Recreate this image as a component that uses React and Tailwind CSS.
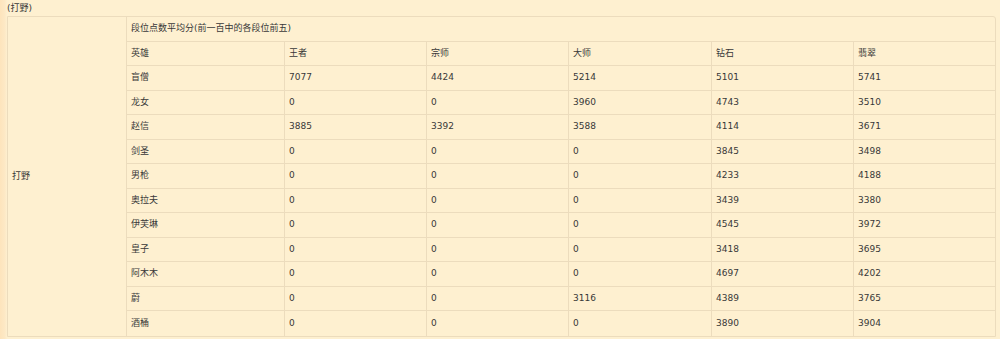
import React from "react";

const tiers = ["王者", "宗师", "大师", "钻石", "翡翠"];

const heroes = [
  ["盲僧", 7077, 4424, 5214, 5101, 5741],
  ["龙女", 0, 0, 3960, 4743, 3510],
  ["赵信", 3885, 3392, 3588, 4114, 3671],
  ["剑圣", 0, 0, 0, 3845, 3498],
  ["男枪", 0, 0, 0, 4233, 4188],
  ["奥拉夫", 0, 0, 0, 3439, 3380],
  ["伊芙琳", 0, 0, 0, 4545, 3972],
  ["皇子", 0, 0, 0, 3418, 3695],
  ["阿木木", 0, 0, 0, 4697, 4202],
  ["蔚", 0, 0, 3116, 4389, 3765],
  ["酒桶", 0, 0, 0, 3890, 3904],
];

const cols = "grid grid-cols-[158px_142px_142px_143px_142px_141px]";

function Row({ cells, last }) {
  return (
    <div className={`${cols} h-[24.5px] ${last ? "" : "border-b border-[#ecdcbd]"}`}>
      {cells.map((c, i) => (
        <div
          key={i}
          className={`flex items-center px-[4px] ${i < cells.length - 1 ? "border-r border-[#ecdcbd]" : ""}`}
        >
          {c}
        </div>
      ))}
    </div>
  );
}

export default function App() {
  return (
    <div
      className="w-[1000px] h-[339px] overflow-hidden bg-[linear-gradient(to_right,#fde4bc_0px,#fde9c6_5px,#fef0d0_7px)] text-[9px] text-[#383838]"
      style={{ fontFamily: '"DejaVu Sans", "Noto Sans CJK SC", sans-serif' }}
    >
      <div className="h-[16px] leading-[16px] pl-[7px]">(打野)</div>
      <div className="ml-[7px] w-[989px] flex border border-[#ecdcbd] rounded-tr-[3px] bg-[#fef0d0]">
        <div className="w-[119px] shrink-0 border-r border-[#ecdcbd] flex items-center px-[4px]">
          打野
        </div>
        <div className="flex-1">
          <div className="h-[24.5px] border-b border-[#ecdcbd] flex items-center px-[4px]">
            段位点数平均分(前一百中的各段位前五)
          </div>
          <Row cells={["英雄", ...tiers]} />
          {heroes.map((h, i) => (
            <Row key={h[0]} cells={h} last={i === heroes.length - 1} />
          ))}
        </div>
      </div>
    </div>
  );
}
